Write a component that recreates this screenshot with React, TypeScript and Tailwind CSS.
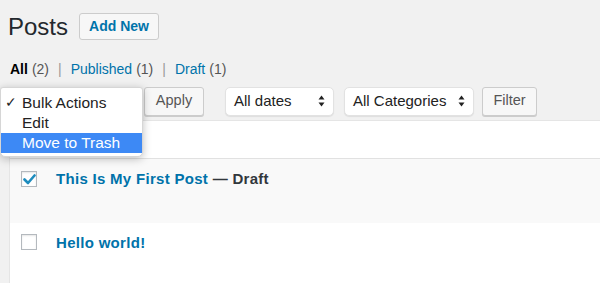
import React from "react";

function Arrows() {
  return (
    <svg width="7" height="12" viewBox="0 0 7 12" className="shrink-0">
      <path d="M3.5 0.5 L6.5 4.5 L0.5 4.5 Z" fill="#222" />
      <path d="M3.5 11.5 L6.5 7.5 L0.5 7.5 Z" fill="#222" />
    </svg>
  );
}

function MacSelect({ label, width }: { label: string; width: string }) {
  return (
    <div
      className={`${width} h-[29px] flex items-center justify-between pl-[8px] pr-[8px] bg-white rounded-[5px] border border-[#e2e2e2] shadow-[0_1px_1px_rgba(0,0,0,0.08)] text-[15px] text-[#222]`}
    >
      <span>{label}</span>
      <Arrows />
    </div>
  );
}

function Btn({ label, width }: { label: string; width: string }) {
  return (
    <div
      className={`${width} h-[29px] flex items-center justify-center bg-[#f7f7f7] border border-[#cccccc] rounded-[3px] shadow-[0_1px_0_#cccccc] text-[14.5px] text-[#555]`}
    >
      {label}
    </div>
  );
}

function Checkbox({ checked }: { checked?: boolean }) {
  return (
    <div className="w-[16px] h-[16px] bg-white border border-[#b4b9be] shadow-[inset_0_1px_2px_rgba(0,0,0,0.1)] flex items-center justify-center shrink-0">
      {checked && (
        <svg width="13" height="11" viewBox="0 0 13 11">
          <path d="M1.5 5.5 L5 9 L11.5 1.5" stroke="#1e8cbe" strokeWidth="2.6" fill="none" strokeLinecap="round" strokeLinejoin="round" />
        </svg>
      )}
    </div>
  );
}

export default function App() {
  return (
    <div
      className="relative w-[600px] h-[283px] overflow-hidden bg-[#f1f1f1] text-[#23282d]"
      style={{ fontFamily: '"Liberation Sans", Arial, sans-serif' }}
    >
      {/* Heading */}
      <div className="flex items-center h-[27px] mt-[13px] pl-[8px]">
        <span className="text-[24px] leading-none text-[#23282d]">Posts</span>
        <div className="ml-[11px] w-[80px] h-[27px] flex items-center justify-center bg-[#f7f7f7] border border-[#cccccc] rounded-[3px] text-[14px] font-bold text-[#0073aa]">
          Add New
        </div>
      </div>

      {/* subsubsub */}
      <div className="flex items-center h-[16px] mt-[21px] pl-[10px] text-[14px] text-[#555]">
        <span className="font-bold text-[#000]">All</span>
        <span className="ml-[4px]">(2)</span>
        <span className="mx-[9px] text-[#999]">|</span>
        <span className="text-[#0073aa]">Published</span>
        <span className="ml-[4px] text-[#555]">(1)</span>
        <span className="mx-[9px] text-[#999]">|</span>
        <span className="text-[#0073aa]">Draft</span>
        <span className="ml-[4px] text-[#555]">(1)</span>
      </div>

      {/* tablenav */}
      <div className="flex items-center h-[30px] mt-[9px]">
        <div className="ml-[9px] w-[127px] h-[29px] rounded-[5px] bg-white border-t-2 border-[#5b9dd9]" />
        <div className="ml-[8px]">
          <Btn label="Apply" width="w-[60px]" />
        </div>
        <div className="ml-[21px]">
          <MacSelect label="All dates" width="w-[109px]" />
        </div>
        <div className="ml-[10px]">
          <MacSelect label="All Categories" width="w-[130px]" />
        </div>
        <div className="ml-[8px]">
          <Btn label="Filter" width="w-[55px]" />
        </div>
      </div>

      {/* Table */}
      <div className="ml-[9px] mt-[4px] border-l border-t border-[#e5e5e5] bg-white">
        <div className="h-[38px] border-b border-[#e1e1e1]" />
        <div className="h-[64px] bg-[#f9f9f9] flex items-start pt-[12px]">
          <div className="ml-[11px]">
            <Checkbox checked />
          </div>
          <div className="ml-[19px] mt-[-1px] text-[15px] tracking-[0.3px] font-bold leading-[18px]">
            <span className="text-[#0073aa]">This Is My First Post</span>
            <span className="text-[#32373c]"> — Draft</span>
          </div>
        </div>
        <div className="h-[70px] bg-white flex items-start pt-[11px]">
          <div className="ml-[11px]">
            <Checkbox />
          </div>
          <div className="ml-[19px] text-[15px] tracking-[0.3px] font-bold leading-[18px] text-[#0073aa]">
            Hello world!
          </div>
        </div>
      </div>

      {/* Dropdown menu */}
      <div className="absolute left-0 top-[87px] w-[143px] pt-[4px] pb-[3px] bg-white rounded-b-[5px] rounded-t-[3px] shadow-[0_2px_8px_rgba(0,0,0,0.25)] border border-[#d6d6d6] text-[15.5px] text-[#222]">
        <div className="h-[21px] flex items-center">
          <span className="w-[21px] pl-[4px] text-[14px]">✓</span>
          <span>Bulk Actions</span>
        </div>
        <div className="h-[20px] flex items-center pl-[21px]">Edit</div>
        <div className="h-[20px] flex items-center pl-[21px] bg-[#3d89f5] text-white">Move to Trash</div>
      </div>
    </div>
  );
}
